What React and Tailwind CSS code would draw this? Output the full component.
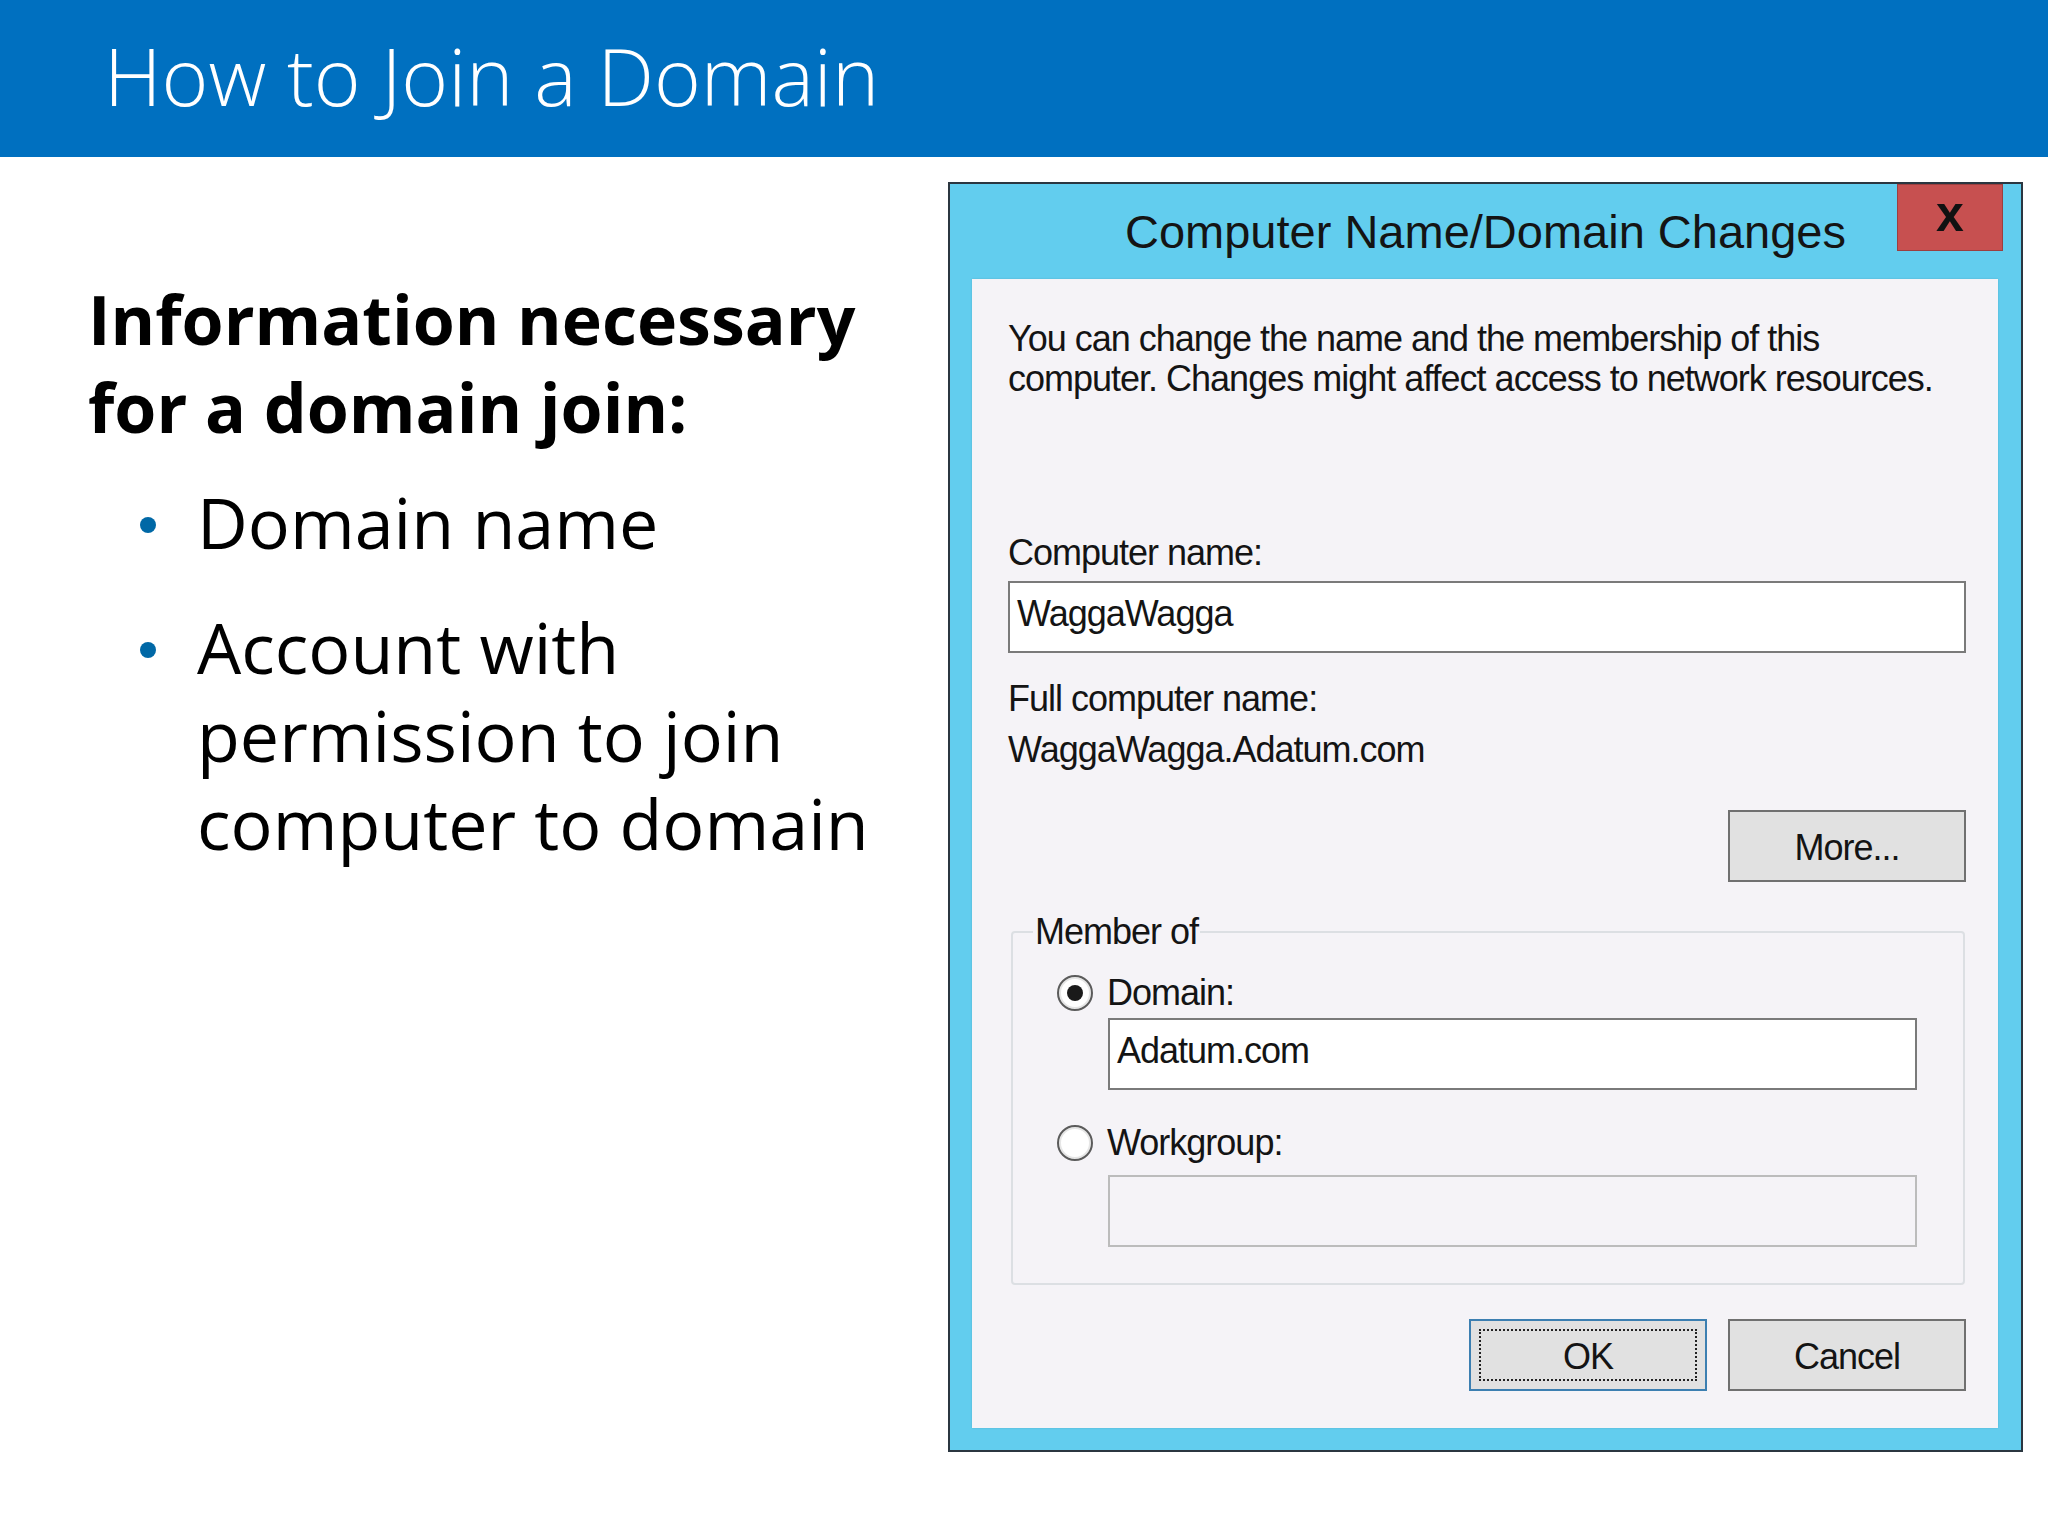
function Radio({ checked }) {
  return (
    <span className="w-[36px] h-[36px] shrink-0 rounded-full border-2 border-[#5b5b5b] bg-white flex items-center justify-center shadow-[inset_0_0_0_2px_#e6e6e6]">
      {checked ? <span className="w-[16px] h-[16px] rounded-full bg-[#1a1a1a]" /> : null}
    </span>
  );
}

function Bullet({ children }) {
  return (
    <li className="flex items-start">
      <span className="w-[57px] shrink-0 pt-[39px]">
        <span className="block w-[16px] h-[16px] rounded-full bg-[#0068a6]" />
      </span>
      <span className="text-[70px] leading-[88px]">{children}</span>
    </li>
  );
}

export default function App() {
  return (
    <div className="w-[2048px] h-[1536px] bg-white overflow-hidden flex flex-col">
      <header className="h-[157px] shrink-0 bg-[#0070c0] pl-[104px] pt-[35px]">
        <h1 className="text-white text-[80px] leading-none font-light font-['Open_Sans',sans-serif]">
          How to Join a Domain
        </h1>
      </header>
      <main className="flex flex-1">
        <section className="w-[948px] shrink-0 pl-[88px] pt-[118px] font-['Open_Sans',sans-serif] text-black">
          <h2 className="text-[68px] leading-[88px] font-bold">
            Information necessary
            <br />
            for a domain join:
          </h2>
          <ul className="mt-[27px] ml-[52px] flex flex-col gap-[37px]">
            <Bullet>Domain name</Bullet>
            <Bullet>
              Account with
              <br />
              permission to join
              <br />
              computer to domain
            </Bullet>
          </ul>
        </section>

        <div className="mt-[25px] w-[1075px] h-[1270px] shrink-0 border-2 border-[#2b3640] bg-[#62cdee] flex flex-col font-['Liberation_Sans',Arial,sans-serif] text-[#141414]">
          <div className="relative h-[95px] shrink-0 pt-[24px] text-center">
            <span className="text-[47px] leading-none">Computer Name/Domain Changes</span>
            <div className="absolute right-[18px] top-0 w-[106px] h-[67px] bg-[#c75050] border border-[#9c3f3f] flex items-center justify-center">
              <span className="text-[50px] font-bold leading-none text-[#111] -mt-[8px]">x</span>
            </div>
          </div>

          <div className="ml-[22px] mr-[23px] h-[1149px] shrink-0 bg-[#f5f3f7] shadow-[0_0_2px_rgba(0,0,0,0.12)] pt-[40px] pl-[36px] pr-[32px] flex flex-col text-[36px] leading-[40px] tracking-[-1px]">
            <p>
              You can change the name and the membership of this
              <br />
              computer. Changes might affect access to network resources.
            </p>
            <p className="mt-[134px]">Computer name:</p>
            <div className="mt-[8px] h-[72px] border-2 border-[#7a7a7a] bg-white pl-[7px] pt-[11px]">WaggaWagga</div>
            <p className="mt-[26px]">Full computer name:</p>
            <p className="mt-[11px]">WaggaWagga.Adatum.com</p>
            <div className="mt-[40px] flex justify-end">
              <div className="w-[238px] h-[72px] border-2 border-[#707070] bg-[#e1e1e1] flex items-center justify-center pt-[3px]">
                More...
              </div>
            </div>

            <fieldset className="mt-[30px] ml-[3px] mr-[1px] border-2 border-[#dcdfe3] rounded-[4px] pb-[36px]">
              <legend className="ml-[20px] px-[2px]">Member of</legend>
              <div className="mt-[21px] pl-[44px] flex items-center h-[40px]">
                <Radio checked />
                <span className="ml-[14px]">Domain:</span>
              </div>
              <div className="mt-[5px] ml-[95px] mr-[46px] h-[72px] border-2 border-[#7a7a7a] bg-white pl-[7px] pt-[11px]">
                Adatum.com
              </div>
              <div className="mt-[33px] pl-[44px] flex items-center h-[40px]">
                <Radio />
                <span className="ml-[14px]">Workgroup:</span>
              </div>
              <div className="mt-[12px] ml-[95px] mr-[46px] h-[72px] border-2 border-[#bcbcbc]" />
            </fieldset>

            <div className="mt-[34px] flex justify-end gap-[21px]">
              <div className="w-[238px] h-[72px] border-2 border-[#3c7fb1] bg-[#e1e1e1] p-[8px]">
                <div className="h-full border-2 border-dotted border-[#222] flex items-center justify-center pt-[3px]">OK</div>
              </div>
              <div className="w-[238px] h-[72px] border-2 border-[#707070] bg-[#e1e1e1] flex items-center justify-center pt-[3px]">
                Cancel
              </div>
            </div>
          </div>
        </div>
      </main>
    </div>
  );
}
